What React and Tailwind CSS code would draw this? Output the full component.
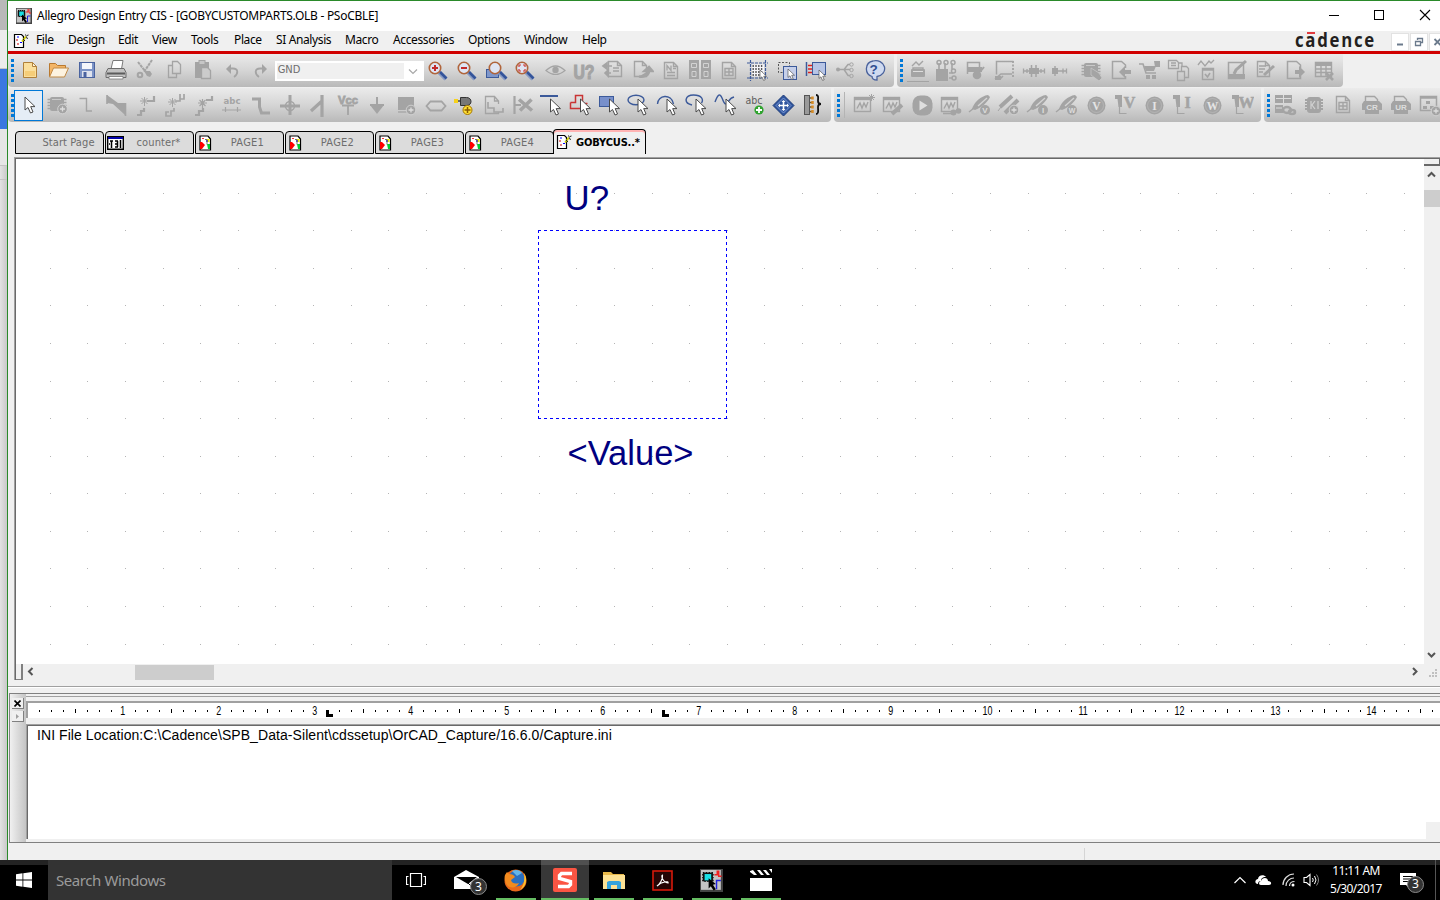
import React from "react";

const G = "#a4a4a4";
const B = "#3c5a9a";

const Svg = ({ children, w = 24, h = 24, className = "" }) => (
  <svg width={w} height={h} viewBox={`0 0 ${w} ${h}`} fill="none" className={`block shrink-0 ${className}`}>
    {children}
  </svg>
);

/* Small pieces shared by several tool icons */
const Pointer = ({ x = 12, y = 6 }) => (
  <path
    transform={`translate(${x} ${y})`}
    d="M0 0V13L3 10.5L5.5 16L8 15L5.7 9.6H10Z"
    fill="#fff"
    stroke="#4a4a4a"
    strokeWidth="1"
  />
);
const Lens = ({ children }) => (
  <>
    <path d="M13 13L20 20" stroke="#8a9cc4" strokeWidth="4.5" />
    <path d="M14 13L20.5 19.5" stroke="#34549a" strokeWidth="2.5" />
    <circle cx="9" cy="9" r="5.7" fill="#dfe5f3" stroke="#b0653c" strokeWidth="1.6" />
    {children}
  </>
);
const Doc = ({ x = 6, y = 4, w = 12, h = 15 }) => (
  <path
    d={`M${x + 0.5} ${y + 0.5}h${w - 4}l4 4v${h - 4}h-${w}zM${x + w - 3.5} ${y + 0.5}v4h4`}
    stroke={G}
    strokeWidth="1.4"
  />
);
const Plus = ({ x = 17, y = 17 }) => (
  <>
    <circle cx={x} cy={y} r="4.8" fill={G} stroke="#d8d8d8" strokeWidth="0.8" />
    <path d={`M${x - 2.5} ${y}h5M${x} ${y - 2.5}v5`} stroke="#ddd" strokeWidth="1.3" />
  </>
);
const Probe = ({ children }) => (
  <>
    <path d="M1 19L6 15" stroke={G} strokeWidth="1.5" />
    <path d="M4 16C6 9 13 3 20 2L22 4C20 9 13 15 7 17Z" fill={G} />
    <path d="M10 13L19 5" stroke="#d4d4d4" strokeWidth="1.3" />
    {children}
  </>
);
const Letter = ({ x, y, size, children, fill = G, anchor = "middle" }) => (
  <text x={x} y={y} fontSize={size} fill={fill} textAnchor={anchor} fontWeight="700" fontFamily="'Liberation Sans', sans-serif">
    {children}
  </text>
);
const Disc = ({ l }) => (
  <>
    <circle cx="12.5" cy="12.5" r="9" fill={G} />
    <circle cx="12.5" cy="12.5" r="7" stroke="#b8b8b8" strokeWidth="0.8" />
    <text x="12.5" y="16.5" fontSize="11.5" fill="#e4e4e4" textAnchor="middle" fontWeight="700" fontFamily="'Liberation Serif', serif">{l}</text>
  </>
);
const Hook = ({ l }) => (
  <>
    <path d="M6.5 10v10.500h7" stroke={G} strokeWidth="1.2" />
    <path d="M2 2h7v12H5.500l-1-8H2z" fill={G} />
    <text x="16.5" y="14.500" fontSize="16" fill={G} stroke={G} strokeWidth="0.500" textAnchor="middle" fontWeight="700" fontFamily="'Liberation Serif', serif">{l}</text>
  </>
);
const Scope = () => (
  <>
    <rect x="2.5" y="4.5" width="16" height="14" stroke={G} strokeWidth="1.4" />
    <path d="M2 6h17" stroke={G} strokeWidth="2.4" />
    <path d="M5 15.500l3-5.500 2 5 2-5 2 4 2-5" stroke={G} strokeWidth="1.4" />
  </>
);
const Chip = () => (
  <>
    <rect x="4" y="4" width="14" height="14" rx="2" fill={G} />
    <path d="M1.500 6.500h19M1.500 9.500h19M1.500 12.500h19M1.500 15.500h19" stroke={G} strokeWidth="1.500" />
    <path d="M6 6.500h9" stroke="#c9c9c9" />
  </>
);

const ICONS = {
  new: (
    <>
      <path d="M6.500 3.500h9l4 4v11h-13z" fill="#fbdf9c" stroke="#b0803a" />
      <path d="M8 12h10v5H8z" fill="#f6cd78" />
      <path d="M15.500 3.500v4h4z" fill="#fff5d8" stroke="#b0803a" />
    </>
  ),
  open: (
    <>
      <path d="M3.500 17.500V4.500h6l2 2h8v4" fill="#f3b566" stroke="#b9792f" />
      <path d="M3.500 18l4-9h15l-4 9z" fill="#fdf3e0" stroke="#c08a46" />
    </>
  ),
  save: (
    <>
      <rect x="4.500" y="3.500" width="15" height="15" fill="#7c93c6" stroke="#4a639f" />
      <rect x="7" y="4" width="10" height="6" fill="#f4f6fb" />
      <rect x="7" y="12" width="10" height="6" fill="#dfe3ee" />
      <rect x="8.500" y="13" width="3" height="5" fill="#4a639f" />
    </>
  ),
  print: (
    <>
      <path d="M7 10L9 1.500h10L17.500 10z" fill="#fff" stroke="#7a7a7a" />
      <path d="M4 9.500h16l2 4v5H2v-5z" fill="#c2c2c2" stroke="#6c6c6c" />
      <path d="M3 14.500h18" stroke="#5c5c5c" strokeWidth="2" />
      <path d="M5 17.500h14v2.500H5z" fill="#fff" stroke="#777" strokeWidth="0.800" />
    </>
  ),
  cut: (
    <>
      <path d="M5 3l7 9M19 1l-8 12" stroke={G} strokeWidth="2" strokeDasharray="3 0.700" />
      <circle cx="7" cy="16" r="2.300" stroke={G} strokeWidth="2" />
      <path d="M11 12h6l2 3-2 3-3-1z" fill={G} />
    </>
  ),
  copy: (
    <>
      <path d="M10.500 2.500h5l3 3v9h-8z" stroke={G} strokeWidth="1.300" />
      <path d="M10 6.500H6.500v12h8V15" stroke={G} strokeWidth="1.300" />
    </>
  ),
  paste: (
    <>
      <path d="M4 3h14v6h-8v10H4z" fill={G} />
      <rect x="8" y="1.500" width="6" height="4" fill="#c6c6c6" stroke={G} />
      <path d="M10.500 8.500h6l3 3v8h-9z" fill="#cbcbcb" stroke={G} strokeWidth="1.300" />
    </>
  ),
  undo: (<><path d="M6 10l5-5v10z" fill={G} /><path d="M9 9.500h4c5 0 6 5 1 8.500" stroke={G} strokeWidth="1.800" /></>),
  redo: (<><path d="M18 10l-5-5v10z" fill={G} /><path d="M15 9.500h-4c-5 0-6 5-1 8.500" stroke={G} strokeWidth="1.800" /></>),
  zin: <Lens><path d="M6 9h6M9 6v6" stroke="#c22b2b" strokeWidth="2" /></Lens>,
  zout: <Lens><path d="M6 9h6" stroke="#c22b2b" strokeWidth="2" /></Lens>,
  zarea: (
    <>
      <rect x="2.500" y="10.500" width="12" height="8" fill="#7f97cb" stroke={B} />
      <g transform="translate(2 0)"><Lens /></g>
    </>
  ),
  zall: <Lens><path d="M6 8V6h2M10 6h2v2M12 10v2h-2M8 12H6v-2" stroke="#d03a3a" strokeWidth="1.200" /></Lens>,
  eye: (
    <>
      <path d="M3 11.500q9.500-9 19 0q-9.500 8-19 0z" stroke={G} strokeWidth="1.200" />
      <circle cx="12.500" cy="11" r="3.200" fill={G} />
    </>
  ),
  uq: <text x="1.500" y="20" fontSize="19.500" fill={G} stroke={G} strokeWidth="1.200" textLength="21" lengthAdjust="spacingAndGlyphs" fontWeight="700" fontFamily="'Liberation Sans', sans-serif">U?</text>,
  back: (
    <>
      <Doc x={7} y={2} w={13} />
      <path d="M2 7h9M2 7l4-3v6zM4 14h6M4 14l3-3v6z" stroke={G} strokeWidth="1.700" fill={G} />
      <path d="M12 9h6M12 12h6" stroke={G} strokeWidth="1.400" />
    </>
  ),
  rot: (
    <>
      <Doc x={4} y={2} w={12} h={15} />
      <path d="M9 17.500c6 1 10-1 10-6M14.500 12l4.500-4 3.500 4z" stroke={G} strokeWidth="2.400" fill={G} />
    </>
  ),
  note: (
    <>
      <Doc x={5} y={3} w={13} h={16} />
      <path d="M8 11.500V6.500l4 5V6.500M14 9.500h3M8 13.500h8M8 16.500h8" stroke={G} strokeWidth="1.300" />
    </>
  ),
  cabinets: (
    <>
      <rect x="1" y="1" width="10" height="19" fill={G} />
      <rect x="13" y="1" width="10" height="19" fill={G} />
      <path d="M3.500 4.500h5v4h-5zM15.500 4.500h5v4h-5zM4 12.500h4v5H4zM16 12.500h4v5h-4z" stroke="#d2d2d2" />
    </>
  ),
  form: (
    <>
      <Doc x={5} y={3} w={13} h={16} />
      <path d="M8 9.500h8v7H8zM8 13h8M12 9.500v7" stroke={G} strokeWidth="1.400" />
    </>
  ),
  grid: (
    <>
      <path d="M1 4h21M1 19h21M4.500 1v21M19.500 1v18" stroke={B} strokeWidth="1.200" strokeDasharray="3 1" />
      <rect x="6" y="5.500" width="12" height="12" fill="#f6f6fb" />
      <path d="M6.500 7h11M6.500 10h11M6.500 13h11M6.500 16h8" stroke="#222" strokeWidth="1.400" strokeDasharray="1.400 1.400" />
      <g transform="translate(14 11) scale(.65)"><Pointer x={0} y={0} /></g>
    </>
  ),
  region: (
    <>
      <rect x="3.500" y="3.500" width="11" height="10" stroke="#555" strokeDasharray="2 1.500" />
      <rect x="8.500" y="7.500" width="13" height="13" fill="#c6d0ea" stroke={B} />
      <g transform="translate(13 10) scale(.65)"><Pointer x={0} y={0} /></g>
    </>
  ),
  pinsel: (
    <>
      <path d="M2.500 3v14" stroke={B} strokeWidth="1.500" />
      <path d="M4 6.500h4M4 10h4M4 13.500h4" stroke="#d22" strokeWidth="1.500" />
      <rect x="8.500" y="3.500" width="13" height="12" fill="#b7c5e6" stroke={B} />
      <g transform="translate(15 11) scale(.65)"><Pointer x={0} y={0} /></g>
    </>
  ),
  tree: (
    <>
      <path d="M4 10.500h7M17 5.500h-2l-4 5 4 6h2M11 10.500h6" stroke={G} strokeWidth="1.500" />
      <circle cx="18.500" cy="5.500" r="1.700" stroke={G} /><circle cx="18.500" cy="11" r="1.700" stroke={G} />
      <circle cx="18.500" cy="17" r="1.700" stroke={G} /><circle cx="5" cy="10.500" r="2" fill={G} />
    </>
  ),
  help: (
    <>
      <path d="M11 2a8.800 8 0 1 1 4 15.500L15 21c-4 0-5-2-5-3.500A8 8 0 0 1 11 2z" fill="#cfdaf0" stroke="#4a629c" strokeWidth="1.300" />
      <Letter x={11.5} y={14.5} size={13.5} fill="#2f4d91">?</Letter>
    </>
  ),
  t1: (
    <>
      <path d="M7 11V9h10v2M6 7l4-4 3 3 4-4" stroke={G} strokeWidth="1.400" />
      <rect x="5" y="10" width="14" height="8" rx="1" fill={G} />
      <path d="M7 12.500h10" stroke="#ddd" /><path d="M1 22.500h22" stroke={G} />
    </>
  ),
  t2: (
    <>
      <rect x="1" y="10" width="12" height="12" fill={G} />
      <path d="M4 4v6M10 4v6M17 4v6M14 14h4M14 19h4" stroke={G} strokeWidth="1.600" />
      <g stroke={G} strokeWidth="1.500"><circle cx="4" cy="3.500" r="2" /><circle cx="11" cy="3.500" r="2" /><circle cx="18" cy="3.500" r="2" /><circle cx="18.500" cy="12" r="2" /><circle cx="19" cy="19" r="2" /></g>
    </>
  ),
  t3: (
    <>
      <path d="M3.500 15V3.500h12V9" stroke={G} strokeWidth="1.500" />
      <rect x="3" y="8" width="15" height="5" fill={G} />
      <circle cx="13" cy="16" r="4.300" fill={G} /><path d="M16 13l4-5" stroke={G} strokeWidth="2" />
    </>
  ),
  t4: (
    <>
      <path d="M3.500 15.500v-13h17" stroke={G} strokeWidth="1.500" />
      <path d="M20 2v16" stroke={G} strokeWidth="1.800" strokeDasharray="2 1.500" />
      <path d="M2 20l6-5h11M7 20l3-3" stroke={G} strokeWidth="1.600" /><path d="M2 17h6v4H2z" fill={G} />
    </>
  ),
  t5: (
    <>
      <path d="M1 12h22M1.500 9.500v5M22.500 9.500v5M5 10v4M19 10v4" stroke={G} strokeWidth="1.300" />
      <rect x="7" y="9" width="10" height="6" fill={G} /><path d="M9.500 6v12M14 6v12" stroke={G} strokeWidth="1.500" />
    </>
  ),
  t6: (
    <>
      <path d="M1 12h15M12 9.500v5M15.500 9.500v5" stroke={G} strokeWidth="1.300" />
      <rect x="1" y="9" width="6" height="6" fill={G} /><path d="M4 7v10" stroke={G} strokeWidth="1.500" />
    </>
  ),
  chipsel: (<><Chip /><path d="M11 9l8 5 3 5-3 3-8-6z" fill={G} stroke="#ccc" strokeWidth="0.700" /></>),
  docin: (<><path d="M16.500 9V6l-4-3.500h-9v17h13V17" stroke={G} strokeWidth="1.500" /><path d="M13 13h9" stroke={G} strokeWidth="4" /><path d="M10 13l6-6v12z" fill={G} /></>),
  cart: (
    <>
      <path d="M1 5h4l3 9h10" stroke={G} strokeWidth="1.600" /><path d="M6 7h12l-2 5H8z" fill={G} />
      <path d="M8 16h4v4H8zM14 16h4v4h-4zM16 2h6v6h-5z" fill={G} />
    </>
  ),
  docs: (
    <>
      <path d="M1.500 1.500h8l2 2v6h-10zM4 4h5M4 6.500h5M11 4h4v4" stroke={G} strokeWidth="1.300" />
      <path d="M10.500 21.500V12.500h7v9zM14.500 12V7.500h5l2 2v9h-4" stroke={G} strokeWidth="1.300" />
    </>
  ),
  wavechk: (
    <>
      <path d="M2 6l3-4 4 5 4-5 2 2 3-3" stroke={G} strokeWidth="1.300" />
      <path d="M6.500 9.500h11v11h-11zM6 11h12" stroke={G} strokeWidth="1.400" /><path d="M9 15l2.500 3 2.500-4" stroke={G} strokeWidth="1.600" />
    </>
  ),
  draft: (
    <>
      <path d="M3.500 3.500h15v16h-15z" stroke={G} strokeWidth="1.500" /><path d="M3 15h17v5H3z" fill={G} />
      <path d="M9 15l2-4 10-9" stroke={G} strokeWidth="3" />
    </>
  ),
  edit: (<><Doc x={3} y={2} w={12} h={15} /><path d="M5 7h7M5 10h6M5 13h4" stroke={G} strokeWidth="1.400" /><path d="M20 7l-10 9" stroke={G} strokeWidth="3" /></>),
  docout: (<><path d="M16.500 9V6l-4-3.500h-9v17h13V17" stroke={G} strokeWidth="1.500" /><path d="M11 13h5" stroke={G} strokeWidth="4" /><path d="M21 13l-6-6v12z" fill={G} /></>),
  table: (
    <>
      <path d="M2.500 3.500h16v14h-16zM2 10h17M2 13.500h17M8 4v14M13 4v14" stroke={G} strokeWidth="1.400" />
      <path d="M2 3h17v4H2z" fill={G} /><path d="M13 14l7 7M20 14l-7 7" stroke={G} strokeWidth="2.600" />
    </>
  ),
  /* second row */
  arrow: <Pointer x={8} y={4} />,
  part: (<><Chip /><Plus x={16.5} y={16} /></>),
  wire: <path d="M4.500 5.500h7V18h5.500" stroke={G} strokeWidth="1.400" />,
  net: (<><path d="M3 2v9M21.500 10v13" stroke={G} strokeWidth="1.600" /><path d="M3 2L14 10h7v12L9 11 3 10z" fill={G} /></>),
  bus1: (<><path d="M21 3v5h-7M11 15v3H8v4H4" stroke={G} strokeWidth="2.200" /><path d="M7 8h9M11.500 4v9M8.500 5l6 6M14.500 5l-6 6" stroke={G} /></>),
  bus2: (<><path d="M22 1v5h-4M18 1v7h-5M12 15v3H9v5H4v-4h3" stroke={G} strokeWidth="1.700" /><path d="M6 9h9M10.500 5v9M7.500 6l6 6M13.500 6l-6 6" stroke={G} /></>),
  bus3: (<><path d="M21 3v4h-6M12 15v3H8v4H4" stroke={G} strokeWidth="2.200" /><path d="M7 10h9M11.500 6v9M8.500 7l6 6M14.500 7l-6 6" stroke={G} strokeWidth="1.200" /></>),
  abcnet: (
    <>
      <text x="12" y="10.500" fontSize="9.500" fill={G} textAnchor="middle" fontWeight="700" fontFamily="'DejaVu Sans Condensed', sans-serif">abc</text>
      <path d="M2 17h19M5.500 14v5M17.500 14v5" stroke={G} strokeWidth="1.200" />
    </>
  ),
  busw: <path d="M3 6h7.500v8l2 6H21" stroke={G} strokeWidth="3" />,
  junction: (<><path d="M12 2v20M2 13h20" stroke={G} strokeWidth="3" /><circle cx="12" cy="13" r="4.500" stroke={G} strokeWidth="1.500" /></>),
  entry: <path d="M15 2v22M4 18L15 8" stroke={G} strokeWidth="3.200" />,
  vcc: (<><text x="2" y="11" fontSize="11" fill={G} stroke={G} strokeWidth="0.800" fontWeight="700" textLength="20" lengthAdjust="spacingAndGlyphs" fontFamily="'Liberation Sans', sans-serif">Vcc</text><path d="M6 12.500h12M12 12v10" stroke={G} strokeWidth="1.800" /></>),
  gnd: (<><path d="M12 4v8M5 12h14" stroke={G} strokeWidth="2" /><path d="M5 12h14l-7 9z" fill={G} /></>),
  hier: (<><path d="M4 4h16v13H4z" fill={G} /><path d="M4 19h9" stroke={G} strokeWidth="1.300" /><Plus x={17} y={17} /></>),
  port: <path d="M2.500 13l4-4.500h11l4 4.500-4 4.500h-11z" stroke={G} strokeWidth="1.800" />,
  pin: (
    <>
      <rect x="1" y="6" width="4" height="4" fill="#f7d21c" /><path d="M5 8h5" stroke="#444" strokeWidth="1.500" />
      <path d="M7.500 4.500h6c6 0 6 8 0 8h-6z" fill="#777" stroke="#333" />
      <circle cx="14.500" cy="17" r="4.500" fill="#ffdf35" stroke="#a57600" /><path d="M11.500 17h6M14.500 14v6" stroke="#8a5d00" strokeWidth="1.500" />
    </>
  ),
  offpage: (<><path d="M16.500 11V8l-4-4.500h-9v17h13V19M12.500 4v4h4" stroke={G} strokeWidth="1.300" /><path d="M6 9v6h6v4h9v-4" stroke={G} strokeWidth="1.600" /></>),
  nc: (<><path d="M3.500 3v18M3 12h7" stroke={G} strokeWidth="2.200" /><path d="M8 6.500l13 11M20.500 6.500L9 17.500" stroke={G} strokeWidth="3.600" /></>),
  line: (<><path d="M0 3h18" stroke={B} strokeWidth="2" /><Pointer x={10.5} y={6} /></>),
  poly: (<><path d="M1.500 9.500h5v-7h7v8h5M1.500 9.500v6h11" stroke="#c93434" strokeWidth="1.500" /><Pointer x={11.5} y={6} /></>),
  rect: (<><rect x="1.500" y="3.500" width="14" height="10" fill="#7890cb" stroke={B} /><Pointer x={11.5} y={6} /></>),
  ellipse: (<><ellipse cx="9" cy="7" rx="8" ry="4.800" stroke={B} strokeWidth="1.400" /><Pointer x={11} y={6} /></>),
  arc: (<><path d="M1.500 11c0-9 14-11 16 0" stroke={B} strokeWidth="1.400" /><Pointer x={11} y={6} /></>),
  earc: (<><path d="M7 12C-2 10 0 2 8.500 2c9 0 10 5 8 8" stroke={B} strokeWidth="1.400" /><Pointer x={11} y={6} /></>),
  bezier: (<><path d="M1 9c3-8 5-9 7-4s3 8 6 4 3-4 6-5" stroke={B} strokeWidth="1.400" /><Pointer x={12} y={6} /></>),
  abc: (
    <>
      <text x="11" y="11" fontSize="10.500" fill="#5e5e5e" textAnchor="middle" fontWeight="400" fontFamily="'DejaVu Sans Condensed', sans-serif">abc</text>
      <circle cx="16" cy="17" r="4.600" fill="#2fa32f" /><path d="M13 17h6M16 14v6" stroke="#fff" strokeWidth="1.800" />
    </>
  ),
  symbol: (
    <>
      <path d="M11.500 2L22 12.500 11.500 23 1 12.500z" fill="#2f559f" stroke="#1c3a78" />
      <path d="M11.500 5l7.500 7.500-7.500 7.500L4 12.500z" stroke="#7f9ad2" />
      <path d="M11.500 8v9M7 12.500h9" stroke="#fff" strokeWidth="1.600" />
      <path d="M9.500 9l2-2 2 2zM9.500 16l2 2 2-2zM8 10.500l-2 2 2 2zM15 10.500l2 2-2 2z" fill="#fff" />
    </>
  ),
  pins: (
    <>
      <rect x="2.500" y="2.500" width="5" height="19" fill="#9a9a9a" stroke="#555" />
      <path d="M8 5h3M8 9.500h3M8 14h3M8 18.500h3" stroke="#7a5a20" strokeWidth="1.500" /><path d="M10.500 3.500v17" stroke="#d58c2a" strokeWidth="2.500" strokeDasharray="3 1.500" />
      <path d="M14 2c3 0 2 3 2 6 0 2 1 3 3 3-2 0-3 1-3 3 0 3 1 7-2 7" stroke="#111" strokeWidth="1.800" />
    </>
  ),
  sim1: (<><Scope /><path d="M16 4.500h7M19.500 1v7M17 2l5 5M22 2l-5 5" stroke={G} /></>),
  sim2: (<><Scope /><path d="M11 21l10-9" stroke={G} strokeWidth="4" /></>),
  play: (<><rect x="2.500" y="2.500" width="20" height="20" rx="8" fill={G} /><path d="M9.500 7.500l8 5-8 5z" fill="#dedede" /></>),
  scope: (<><Scope /><path d="M4 20.500h10" stroke={G} strokeWidth="1.600" /><circle cx="14.500" cy="19.500" r="3" fill={G} /><circle cx="19.500" cy="18" r="2.800" fill={G} /></>),
  pv: <Probe><circle cx="17" cy="17" r="5" fill={G} /><Letter x={17} y={20} size={8} fill="#ddd">V</Letter></Probe>,
  pd: (<><path d="M3 14L15 3M8 20L21 7" stroke={G} strokeWidth="4" /><path d="M1 18l3-4" stroke={G} /><Plus x={17} y={17} /></>),
  pi: <Probe><circle cx="17" cy="17" r="5" fill={G} /><Letter x={17} y={20} size={8} fill="#ddd">I</Letter></Probe>,
  pw: <Probe><circle cx="17" cy="17" r="5" fill={G} /><Letter x={17} y={20} size={7} fill="#ddd">W</Letter></Probe>,
  dv: <Disc l="V" />, di: <Disc l="I" />, dw: <Disc l="W" />,
  hv: <Hook l="V" />, hi: <Hook l="I" />, hw: <Hook l="W" />,
  bench: (
    <>
      <path d="M2 2h8v8H2zM11 2h8v8h-8zM2 12h8v8H2z" fill={G} /><path d="M3 5.500h15M3 15h6" stroke="#ddd" />
      <ellipse cx="14" cy="17" rx="4" ry="3" stroke={G} strokeWidth="2.500" /><ellipse cx="19" cy="19" rx="3" ry="2" stroke={G} strokeWidth="2.500" />
    </>
  ),
  ki: (<><rect x="5" y="4" width="14" height="16" rx="3" fill={G} /><path d="M3 7h18M3 10h18M3 13h18M3 16h18" stroke={G} strokeWidth="1.800" /><path d="M9 8v8M13 8l-3 4 3 4M16 8v8" stroke="#d2d2d2" strokeWidth="1.200" /></>),
  cr: (<><path d="M5.500 9V3.500h9l3 3V9" stroke={G} strokeWidth="1.400" /><path d="M4 8h15l3 3v6H2v-6z" fill={G} /><path d="M5 17h14v4H5z" fill={G} /><Letter x={12} y={16.5} size={8} fill="#ddd">CR</Letter></>),
  ur: (<><path d="M5.500 9V3.500h9l3 3V9" stroke={G} strokeWidth="1.400" /><path d="M4 8h15l3 3v6H2v-6z" fill={G} /><path d="M5 17h14v4H5z" fill={G} /><Letter x={12} y={16.5} size={8} fill="#ddd">UR</Letter></>),
  flow: (<><path d="M2.500 3.500h16v14h-16zM2 5h17" stroke={G} strokeWidth="1.500" /><path d="M8 8h4v3H8zM5 13h4v3H5zM12 13h4v3h-4z" fill={G} /><Plus x={18} y={18} /></>),
};

const Tool = ({ name }) => (
  <div className="flex w-[29.08px] shrink-0 justify-center">
    <Svg>{ICONS[name]}</Svg>
  </div>
);
const Tools = ({ names }) => (
  <div className="flex shrink-0">
    {names.split(" ").map((n, i) => <Tool key={i} name={n} />)}
  </div>
);
const Grip = () => (
  <div className="ml-[3px] flex w-[3px] shrink-0 flex-col gap-[2px]">
    {[0, 1, 2, 3, 4].map((i) => <div key={i} className="h-[3px] w-[3px] bg-[#0078d7]" />)}
  </div>
);
const Bar = ({ className, children }) => (
  <div className={`flex shrink-0 items-center rounded-b bg-linear-to-b from-[#ebebeb] via-[#d5d5d5] to-[#b9b9b9] ${className}`}>
    {children}
  </div>
);

const PageIcon = () => (
  <Svg w={13} h={16}>
    <path d="M1 1h8l2.500 3v11H1z" fill="#fff" stroke="#000" strokeWidth="1.200" />
    <path d="M1 7h2l3 3-3 4H1z" fill="#f00" /><path d="M3 3h2v1H3z" fill="#f33" />
    <path d="M8 4h2.500v3H7z" fill="#ee0" /><path d="M8 9h3v5H9z" fill="#0c3" /><path d="M6 4.500h2v5" stroke="#777" /><path d="M7 6h2" stroke="#00f" />
  </Svg>
);
const PartIcon = () => (
  <Svg w={16} h={16}>
    <path d="M1.500 1.500h7l2 2v11h-9z" fill="#fff" stroke="#000" strokeWidth="1.200" />
    <path d="M4 4h2M7 9.500h2" stroke="#00f" strokeWidth="1.200" /><path d="M3 7h2M4 11h2" stroke="#c00" strokeWidth="1.200" />
    <path d="M9 8.500l4-5" stroke="#cc0" strokeWidth="1.800" /><path d="M12.500 1.500l1 2M13 4.500l2 1M10 6l2 2M14 2.500l1.500-.5" stroke="#222" />
  </Svg>
);
const AppIcon = ({ s = 16 }) => (
  <svg width={s} height={s} viewBox="0 0 16 16" className="block shrink-0">
    <rect width="16" height="16" fill="#444" /><rect x="0.700" y="0.700" width="13.800" height="13.800" fill="#c4c4c4" />
    <path d="M10 4h2V1M13 1v4h2" stroke="#e22" fill="none" /><path d="M11.500 14V8h3" stroke="#22d" fill="none" />
    <path d="M2 2.500h7v6H2z" fill="#111" strokeDasharray="1 1" stroke="#111" /><path d="M3.200 3.500h4.600v4.400H3.200z" fill="#19e0e6" />
    <path d="M6 6.500l5 4-2 .5 2 3-1.500 1-2-3-1.500 1.500z" fill="#000" />
  </svg>
);

const MENU = [
  ["File", "w-[32px]"], ["Design", "w-[50px]"], ["Edit", "w-[34px]"], ["View", "w-[39px]"], ["Tools", "w-[43px]"],
  ["Place", "w-[42px]"], ["SI Analysis", "w-[69px]"], ["Macro", "w-[48px]"], ["Accessories", "w-[75px]"],
  ["Options", "w-[56px]"], ["Window", "w-[58px]"], ["Help", "w-[40px]"],
];

const TitleBar = () => (
  <div className="flex h-[30px] shrink-0 items-center bg-white pl-[8px]">
    <AppIcon />
    <span className="ml-[5px] flex-1 whitespace-nowrap text-[12px] tracking-[-0.275px] text-black">
      Allegro Design Entry CIS - [GOBYCUSTOMPARTS.OLB - PSoCBLE]
    </span>
    <svg width="112" height="12" viewBox="0 0 112 12" fill="none" stroke="#000" className="-mt-[2px] block" shapeRendering="crispEdges">
      <path d="M1 6.500h10" /><path d="M46.500 1.500h9v9h-9z" />
      <path d="M92 1l10 10M102 1L92 11" shapeRendering="auto" strokeWidth="1.100" />
    </svg>
  </div>
);

const MdiButton = ({ children }) => (
  <div className="flex h-[18px] w-[18px] shrink-0 items-center justify-center border border-[#e2e2e2] bg-white">
    <Svg w={10} h={10}>{children}</Svg>
  </div>
);

const MenuBar = () => (
  <div className="flex h-[20px] shrink-0 items-center bg-[#f0f0f0] pl-[5px]">
    <PartIcon />
    <div className="-mt-[2px] ml-[7px] flex flex-1 text-[12px] leading-[18px] tracking-[-0.380px] text-black">
      {MENU.map(([t, w]) => <span key={t} className={`whitespace-nowrap ${w}`}>{t}</span>)}
    </div>
    <div className="relative h-[20px] w-[96px] shrink-0">
      <span className="block h-[20px] w-[108px] origin-left scale-x-[0.860] whitespace-nowrap font-['Open_Sans'] text-[19.500px] font-bold leading-[17px] tracking-[2px] text-[#231f20]">cadence</span>
      <div className="absolute left-[12px] top-[1px] h-[2px] w-[8px] bg-[#e03a3e]" />
    </div>
    <div className="-mr-[7px] mt-[2px] flex shrink-0 gap-px">
      <MdiButton><path d="M2 7.500h6" stroke="#6b7a8c" strokeWidth="2" /></MdiButton>
      <MdiButton><path d="M3.500 3V1.500h5v4H7M1.500 4.500h5v4h-5z" stroke="#6b7a8c" strokeWidth="1.300" /></MdiButton>
      <MdiButton><path d="M1.500 2l6 6M7.500 2l-6 6" stroke="#6b7a8c" strokeWidth="1.800" /></MdiButton>
    </div>
  </div>
);

const Toolbars = () => (
  <div className="flex shrink-0 flex-col gap-px bg-[#f0f0f0]">
    <div className="flex h-[33px] gap-[3px]">
      <Bar className="w-[886px]">
        <Grip />
        <Tools names="new open save print cut copy paste undo redo" />
        <div className="-ml-px flex h-[20px] w-[149px] shrink-0 items-center bg-white px-[2px]">
          <div className="h-[16px] flex-1 bg-[#f0f0f0] pl-[1px] font-['DejaVu_Sans_Condensed'] text-[11px] leading-[14px] text-[#6d6d6d]">GND</div>
          <Svg w={18} h={16}><path d="M5 6.500l4 4 4-4" stroke="#a8a8a8" strokeWidth="1.200" /></Svg>
        </div>
        <Tools names="zin zout zarea zall eye uq back rot note cabinets form grid region pinsel tree help" />
      </Bar>
      <Bar className="w-[446px]">
        <Grip />
        <Tools names="t1 t2 t3 t4 t5 t6 chipsel docin cart docs wavechk draft edit docout table" />
      </Bar>
    </div>
    <div className="flex h-[34px] gap-[3px] overflow-hidden">
      <Bar className="w-[823px]">
        <Grip />
        <div className="flex h-[31px] w-[29px] shrink-0 items-center justify-center border border-[#0078d7] bg-[#e5edf6]">
          <Svg>{ICONS.arrow}</Svg>
        </div>
        <Tools names="part wire net bus1 bus2 bus3 abcnet busw junction entry vcc gnd hier port pin offpage nc line poly rect ellipse arc earc bezier abc symbol pins" />
      </Bar>
      <Bar className="w-[427px]">
        <Grip />
        <div className="mx-[4px] h-[26px] w-px bg-[#b4b4b4]" />
        <Tools names="sim1 sim2 play scope pv pd pi pw dv hv di hi dw hw" />
      </Bar>
      <Bar className="w-[190px]">
        <Grip />
        <Tools names="bench ki form cr ur flow" />
      </Bar>
    </div>
  </div>
);

const Tab = ({ label, icon }) => (
  <div className="flex h-[23px] w-[89px] shrink-0 items-center rounded-t-[4px] border border-black bg-[#dcdcdc]">
    <div className="flex w-[18px] shrink-0 justify-center">{icon}</div>
    <span className="flex-1 whitespace-nowrap pt-[2px] text-center text-[11px] tracking-[0.100px] text-[#6d6d6d]">{label}</span>
  </div>
);

const Tabs = () => (
  <div className="flex h-[35px] shrink-0 items-end gap-px bg-[#f0f0f0] pb-[3px] pl-[7px] font-['DejaVu_Sans_Condensed']">
    <Tab label="Start Page" />
    <Tab
      label="counter*"
      icon={
        <Svg w={17} h={14}>
          <path d="M.700.700h15.600v12.600H.700z" fill="#fff" stroke="#000" strokeWidth="1.400" /><path d="M1 1h15v2H1z" fill="#00a" />
          <path d="M3 5h3M4.500 5v7M8 5h3M8 8h3M8 11h3M10.500 5v6M13.500 4v8M2 8h1" stroke="#000" strokeWidth="1.500" />
        </Svg>
      }
    />
    {["PAGE1", "PAGE2", "PAGE3", "PAGE4"].map((p) => (
      <Tab key={p} icon={<PageIcon />} label={<span className="pr-[2px] tracking-[0.250px]">{p}</span>} />
    ))}
    <div className="-ml-[2px] flex h-[25px] w-[93px] items-center rounded-t-[4px] border border-b-0 border-black bg-[#f0f0f0] shadow-[inset_0_2px_0_#ffb4b4]">
      <div className="ml-[2px]"><PartIcon /></div>
      <span className="ml-[4px] whitespace-nowrap pt-[2px] text-[11px] font-bold tracking-[-0.150px] text-black">GOBYCUS..*</span>
    </div>
  </div>
);

const COLS = Array.from({ length: 37 }, (_, i) => Math.floor(50.3 + i * 37.61));
const ROWS = Array.from({ length: 13 }, (_, i) => Math.floor(193.1 + i * 37.58));

const Chevron = ({ d }) => (
  <Svg w={9} h={9}><path d={d} stroke="#555" strokeWidth="2" /></Svg>
);

const Editor = () => (
  <div className="ml-[6px] flex h-[523px] shrink-0 flex-col border-l border-t border-[#a0a0a0]">
    <div className="flex flex-1 flex-col border-l border-t border-[#696969]">
      <div className="flex h-[505px]">
        <svg width="1408" height="505" viewBox="16 159 1408 505" className="block shrink-0 bg-white">
          <g fill="#b4b4b4" shapeRendering="crispEdges">
            {ROWS.map((y) => COLS.map((x) => <rect key={`${x}-${y}`} x={x} y={y} width="1" height="1" />))}
          </g>
          <path d="M538 230.500H727M538 418.500H727M538.500 230V419M726.500 230V419" stroke="#00f" strokeDasharray="3 3" shapeRendering="crispEdges" />
          <g fill="#000080" fontFamily="'Liberation Sans', Arial, sans-serif">
            <text x="564.500" y="210" fontSize="35.500" textLength="44.500" lengthAdjust="spacingAndGlyphs">U?</text>
            <text x="567.500" y="465" fontSize="35.500" textLength="126" lengthAdjust="spacingAndGlyphs">&lt;Value&gt;</text>
          </g>
        </svg>
        <div className="flex w-[16px] flex-col items-center bg-[#f0f0f0]">
          <div className="h-[7px] w-full border-b-2 border-r border-[#696969] bg-[#f0f0f0]" />
          <div className="-ml-px mt-[4px]"><Chevron d="M1 6.500l3.500-3.500L8 6.500" /></div>
          <div className="mt-[11px] h-[17px] w-full bg-[#cdcdcd]" />
          <div className="flex-1" />
          <div className="-ml-px mb-[5px]"><Chevron d="M1 3l3.500 3.500L8 3" /></div>
        </div>
      </div>
      <div className="flex h-[16px] items-center bg-[#f0f0f0]">
        <div className="h-full w-[7px] border-b border-r-2 border-[#808080] bg-[#f0f0f0]" />
        <div className="-mt-[2px] ml-[3px]"><Chevron d="M6.500 1L3 4.500 6.500 8" /></div>
        <div className="ml-[100px] h-[15px] w-[79px] bg-[#cdcdcd]" />
        <div className="flex-1" />
        <div className="-mt-[2px]"><Chevron d="M3 1l3.500 3.500L3 8" /></div>
        <div className="w-[9px]" />
        <Svg w={12} h={12} className="mt-[4px]">
          <path d="M7 1h2v2H7zM4 4h2v2H4zM7 4h2v2H7zM1 7h2v2H1zM4 7h2v2H4zM7 7h2v2H7z" fill="#c0c0c0" />
        </Svg>
      </div>
    </div>
  </div>
);

const Ruler = () => (
  <div className="relative flex h-[15px] shrink-0 overflow-hidden bg-white pl-[5px]">
    {Array.from({ length: 15 }, (_, k) => (
      <div key={k} className="grid w-[96.08px] shrink-0 grid-cols-8 items-center justify-items-center">
        {[0, 1, 2, 3, 4, 5, 6].map((i) => (
          <div key={i} className={i === 3 ? "h-[4px] w-px bg-black" : "h-[2px] w-px bg-black"} />
        ))}
        {k < 14 && <span className="-ml-[1px] scale-x-[0.660] text-[13.500px] leading-[15px] text-black">{k + 1}</span>}
      </div>
    ))}
    <div className="absolute left-[298px] top-[7px] h-[7px] w-[7px] border-b-[3px] border-l-[3px] border-black" />
    <div className="absolute left-[634px] top-[7px] h-[7px] w-[7px] border-b-[3px] border-l-[3px] border-black" />
  </div>
);

const SessionLog = () => (
  <div className="ml-px mt-[5px] flex h-[150px] shrink-0 border-y border-l border-[#808080] bg-[#f0f0f0]">
    <div className="flex w-[16px] shrink-0 flex-col bg-linear-to-r from-[#f0f0f0] to-[#c4c4c4] pl-[2px] pt-[4px]">
      <div className="flex h-[11px] w-[12px] items-center justify-center border-b border-r border-[#808080] bg-[#f0f0f0]">
        <Svg w={7} h={7}><path d="M.5.500l6 6M6.500.500l-6 6" stroke="#000" strokeWidth="1.600" /></Svg>
      </div>
      <div className="mt-[2px] flex h-[11px] w-[12px] items-center justify-center border-b border-r border-[#808080] bg-[#f0f0f0]">
        <Svg w={5} h={7}><path d="M1 1l3 2.500-3 2.500z" fill="#a0a0a0" /></Svg>
      </div>
    </div>
    <div className="flex flex-1 flex-col overflow-hidden font-['Liberation_Sans']">
      <div className="mt-[2px] h-px shrink-0 bg-[#a0a0a0]" />
      <div className="mt-[4px] shrink-0 border-l-2 border-t-2 border-[#a0a0a0]"><Ruler /></div>
      <div className="mt-[6px] flex h-[115px] border-l border-t border-[#a0a0a0]">
        <div className="flex flex-1 items-end border-l border-t border-[#696969] bg-white">
          <span className="flex-1 self-start whitespace-nowrap pl-[9px] pt-[1px] text-[14px] leading-[17px] tracking-[0.070px] text-black">
            INI File Location:C:\Cadence\SPB_Data-Silent\cdssetup\OrCAD_Capture/16.6.0/Capture.ini
          </span>
          <div className="h-[17px] w-[14px] bg-[#f0f0f0]" />
        </div>
      </div>
    </div>
  </div>
);

const Badge = () => (
  <div className="absolute -bottom-[5px] -right-[8px] flex h-[17px] w-[17px] items-center justify-center rounded-full border border-[#8a8a8a] bg-[#333] text-[12px] text-white">3</div>
);

const TaskButton = ({ running, active, children }) => (
  <div className="flex h-[40px] w-[49px] shrink-0 flex-col items-center">
    <div className={`flex h-[38px] w-[48px] items-center justify-center pt-[2px] ${active ? "bg-linear-to-b from-[#505050] from-[12%] to-[#383838] to-[13%]" : ""}`}>{children}</div>
    {running && <div className={`h-[2px] bg-[#65bd62] ${active ? "w-[48px]" : "w-[40px]"}`} />}
  </div>
);

const Taskbar = () => (
  <div className="flex h-[40px] shrink-0 items-center bg-linear-to-b from-[#232323] from-[12%] to-black to-[13%] font-['Noto_Sans']">
    <div className="flex w-[48px] justify-center">
      <svg width="16" height="16" viewBox="0 0 16 16" fill="#fff"><path d="M0 2.200l6.500-.9v6.300H0zM7.300 1.200L16 0v7.600H7.300zM0 8.400h6.500v6.300L0 13.800zM7.300 8.400H16V16l-8.700-1.200z" /></svg>
    </div>
    <div className="flex h-[40px] w-[344px] items-center bg-[#333] pl-[8px] text-[15px] tracking-[-0.420px] text-[#9b9b9b]">
      <span className="pt-[1px]">Search Windows</span>
    </div>
    <div className="flex flex-1 pl-px">
      <TaskButton><div className="pr-[3px]"><Svg w={20} h={16}><path d="M4.500 1.500h11v13h-11zM2.500 4.500h-2v8h2M17.500 4.500h2v8h-2" stroke="#fff" strokeWidth="1.200" /></Svg></div></TaskButton>
      <TaskButton>
        <div className="relative">
          <svg width="25" height="20" viewBox="0 0 25 20"><path d="M0 7L12 0l13 7v12H0z" fill="#fff" /><path d="M2 7h21l-9 7z" fill="#000" /><path d="M13 12l4 4" stroke="#000" /></svg>
          <Badge />
        </div>
      </TaskButton>
      <TaskButton running>
        <svg width="23" height="23" viewBox="0 0 23 23">
          <circle cx="11.500" cy="11.500" r="11" fill="#e8681b" /><circle cx="12.500" cy="9.500" r="8" fill="#2a6fc0" />
          <path d="M8 2c4-2 8-1 10 2l-5 3z" fill="#63b5ea" />
          <path d="M20 4c4 6 2 14-4 17 4-5 5-10 4-17z" fill="#fcc430" />
          <path d="M1 6l2-3 2 2c3 0 5 1 6 3l-4 3c1 4 5 4 8 3-2 5-9 6-12 2C1 13 0 9 1 6z" fill="#f28b1f" />
        </svg>
      </TaskButton>
      <TaskButton running active>
        <Svg w={24} h={24}>
          <rect width="24" height="24" rx="2" fill="#fb5543" />
          <path d="M19 5.500H8.500L6.500 7.500v3l11 3v3l-2 2H5" stroke="#fff" strokeWidth="3.400" />
        </Svg>
      </TaskButton>
      <TaskButton running>
        <svg width="22" height="19" viewBox="0 0 22 19"><path d="M0 1h8l2 2h11v15H0z" fill="#e8b94a" /><path d="M0 4h22v14H0z" fill="#fde294" /><path d="M4 18v-7l2-1h10l2 1v7h-4v-4H8v4z" fill="#35a3dc" /></svg>
      </TaskButton>
      <TaskButton running>
        <Svg w={21} h={21}>
          <rect x="1" y="1" width="19" height="19" fill="#240505" stroke="#d6190b" strokeWidth="1.600" />
          <path d="M5 16c3-2 6-7 5.500-11C9 5 10 12 16 13c1-2-6-2-11 3z" stroke="#fff" strokeWidth="1.200" />
        </Svg>
      </TaskButton>
      <TaskButton running><AppIcon s={23} /></TaskButton>
      <TaskButton running>
        <svg width="22" height="23" viewBox="0 0 22 23" fill="#fff"><path d="M0 9h22v13H0zM0 2l3-1 4 5H4L0 3zM7 1h3l4 5h-3zM13 1h3l4 5h-3zM19 0h3v4z" /></svg>
      </TaskButton>
    </div>
    <div className="flex items-center">
      <Svg w={12} h={12}><path d="M.5 9L6 3.500 11.500 9" stroke="#fff" strokeWidth="1.200" /></Svg>
      <svg width="17" height="12" viewBox="0 0 17 12" fill="#fff" className="ml-[9px]"><path d="M3 10C-1 10 0 5 3 5c0-4 6-5 8-2-4 0-5 2-5 4-2 0-3 1-3 3z" /><path d="M6 11c-3 0-2-4 0-4 1-4 7-4 7 0 4 0 4 4 1 4z" /></svg>
      <Svg w={14} h={14} className="ml-[10px]"><path d="M1 12C1 6 6 1 12 1M4 13c0-5 4-8 8-8M7.500 13c0-3 2-4.500 5-4.500" stroke="#ddd" strokeWidth="1.200" /><circle cx="11" cy="12" r="1.500" fill="#fff" /></Svg>
      <Svg w={17} h={14} className="ml-[7px]"><path d="M1 4.500h2.500L7 1.500v11L3.500 9.500H1z" stroke="#fff" strokeWidth="1.100" /><path d="M9.500 5q1.500 2 0 4M11.500 3q3 4 0 8" stroke="#fff" /><path d="M13.500 1.500q4 5.500 0 11" stroke="#888" /></Svg>
      <div className="-mt-[1px] ml-[4px] flex w-[64px] flex-col items-center whitespace-nowrap text-[12px] leading-[18px] tracking-[-0.580px] text-white">
        <span>11:11 AM</span><span>5/30/2017</span>
      </div>
      <div className="relative ml-[12px] mr-[19px]">
        <svg width="16" height="15" viewBox="0 0 16 15"><path d="M0 0h16v12H9v3l-3-3H0z" fill="#fff" /><path d="M3 3.500h10M3 6h10M3 8.500h7" stroke="#000" /></svg>
        <Badge />
      </div>
      <div className="mr-[4px] h-[40px] w-px bg-[#555]" />
    </div>
  </div>
);

export default function App() {
  return (
    <div className="flex h-[900px] w-[1440px] flex-col overflow-hidden bg-[#f0f0f0] font-['Noto_Sans',sans-serif]">
      <div className="flex h-[860px] shrink-0">
        <div className="flex w-[7px] shrink-0 flex-col bg-linear-to-r from-[#e3e3e3] to-[#c9c9c9]">
          <div className="h-[30px] bg-[#b9b9b9]" />
          <div className="h-[39px] border-b border-[#c4c4c4] bg-[#ececec]" />
          <div className="h-[60px] bg-[#3b78e0]" />
          <div className="h-[37px] border-b border-[#c4c4c4] bg-[#e6e6e6]" />
          <div className="h-[14px] border-b border-[#c4c4c4]" />
        </div>
        <div className="flex w-[1433px] flex-col overflow-hidden border-l border-t border-[#2a8a2a] bg-[#f0f0f0]">
          <TitleBar />
          <MenuBar />
          <div className="h-[3px] shrink-0 bg-[#d00000]" />
          <Toolbars />
          <Tabs />
          <Editor />
          <div className="mt-[1px] h-[6px] shrink-0 border-b border-[#a0a0a0] bg-[#f0f0f0]" />
          <div className="h-px shrink-0 bg-white" />
          <SessionLog />
          <div className="flex flex-1 justify-end">
            <div className="mt-[5px] w-[356px] border-l border-[#d5d5d5]" />
          </div>
        </div>
      </div>
      <Taskbar />
    </div>
  );
}
